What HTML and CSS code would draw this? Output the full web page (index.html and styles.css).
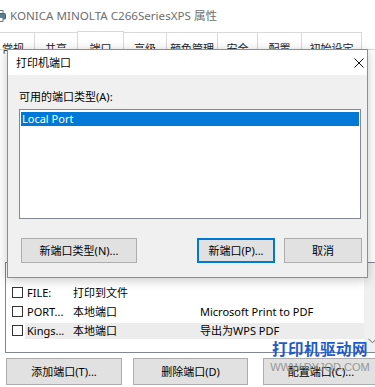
FILE: index.html
```html
<!DOCTYPE html>
<html lang="zh-CN">
<head>
<meta charset="utf-8">
<title>打印机端口</title>
<link rel="stylesheet" href="styles.css">
</head>
<body>
<div class="screen">
  <div class="win">
    <div class="titlebar">
      <svg class="app-icon" width="13" height="12" viewBox="0 0 13 12">
        <rect x="3" y="0.5" width="7" height="3.5" fill="#fff" stroke="#6b7b86"/>
        <rect x="0.5" y="3.5" width="12" height="5.5" rx="1" fill="#5d7f95" stroke="#44606f"/>
        <rect x="3" y="7.5" width="7" height="4" fill="#fff" stroke="#6b7b86"/>
      </svg>
      <span class="title">KONICA MINOLTA C266SeriesXPS 属性</span>
    </div>
    <div class="tabs">
      <div class="tab t1">常规</div>
      <div class="tab t2">共享</div>
      <div class="tab t3 sel">端口</div>
      <div class="tab t4">高级</div>
      <div class="tab t5">颜色管理</div>
      <div class="tab t6">安全</div>
      <div class="tab t7">配置</div>
      <div class="tab t8">初始设定</div>
    </div>
    <div class="page">
      <div class="ports">
        <div class="port-list">
          <div class="port-head"></div>
          <div class="row"><span class="cb"></span><div class="cells"><span class="c1">FILE:</span><span class="c2">打印到文件</span><span class="c3"></span></div></div>
          <div class="row"><span class="cb"></span><div class="cells"><span class="c1">PORT...</span><span class="c2">本地端口</span><span class="c3">Microsoft Print to PDF</span></div></div>
          <div class="row"><span class="cb"></span><div class="cells hot"><span class="c1">Kings...</span><span class="c2">本地端口</span><span class="c3">导出为WPS PDF</span></div></div>
        </div>
        <div class="scrollbar">
          <svg class="arrow" width="9" height="6" viewBox="0 0 9 6"><path d="M0.5 0.8 L4.5 4.8 L8.5 0.8" fill="none" stroke="#606060" stroke-width="1"/></svg>
        </div>
      </div>
      <div class="page-buttons">
        <button class="btn pb1">添加端口(T)...</button>
        <button class="btn pb2">删除端口(D)</button>
        <button class="btn pb3">配置端口(C)...</button>
      </div>
    </div>
  </div>

  <div class="dialog">
    <div class="dlg-title">
      <span>打印机端口</span>
      <svg class="close" width="10" height="10" viewBox="0 0 10 10"><path d="M0.5 0.5 L9.5 9.5 M9.5 0.5 L0.5 9.5" stroke="#111" stroke-width="1"/></svg>
    </div>
    <div class="dlg-body">
      <label class="dlg-label">可用的端口类型(A):</label>
      <div class="listbox">
        <div class="item sel">Local Port</div>
      </div>
      <div class="dlg-buttons">
        <button class="btn db1">新端口类型(N)...</button>
        <button class="btn db2 default">新端口(P)...</button>
        <button class="btn db3">取消</button>
      </div>
    </div>
  </div>

  <div class="watermark">
    <span class="wm-cn">打印机驱动网</span>
    <span class="wm-url">WWW.DYJQD.COM</span>
  </div>
</div>
</body>
</html>
```
FILE: styles.css
```css
* { box-sizing: border-box; margin: 0; padding: 0; }
html, body { width: 375px; height: 387px; overflow: hidden; background: #fff; }
body {
  font-family: "Noto Sans", "Noto Sans CJK SC", sans-serif;
  font-size: 11px;
  line-height: 14px;
  color: #000;
}
.screen { position: relative; width: 375px; height: 387px; overflow: hidden; }

/* parent window */
.win { position: relative; z-index: 0; display: flex; flex-direction: column; width: 375px; height: 387px; background: #fff; }
.titlebar {
  height: 31px;
  display: flex;
  align-items: center;
  gap: 4px;
  margin-left: -7px;
  flex: none;
}
.app-icon { flex: none; }
.title { font-size: 11.6px; color: #6e6e6e; white-space: nowrap; }

.tabs {
  display: flex;
  align-items: flex-end;
  height: 19px;
  margin-left: -8px;
  border-bottom: 1px solid #d9d9d9;
  flex: none;
}
.tab {
  height: 17px;
  padding-top: 9px;
  text-align: center;
  border: 1px solid #d9d9d9;
  border-bottom: none;
  border-left: none;
  background: #fff;
  color: #222;
  flex: none;
  white-space: nowrap;
}
.tab.sel { height: 19px; margin-bottom: -1px; padding-top: 10px; border-left: 1px solid #d9d9d9; margin-left: -1px; }
.t1 { width: 43px; }
.t2 { width: 43px; }
.t3 { width: 47px; }
.t4 { width: 43px; }
.t5 { width: 51px; }
.t6 { width: 40px; }
.t7 { width: 44px; }
.t8 { width: 60px; }

.page { flex: 1; display: flex; flex-direction: column; }
.ports {
  margin-top: 212px;
  margin-left: 5px;
  width: 377px;
  height: 91px;
  border: 1px solid #828790;
  display: flex;
  flex: none;
}
.port-list { flex: 1; min-width: 0; }
.port-head { height: 20px; }
.row { display: flex; align-items: center; height: 19px; }
.cb {
  flex: none;
  width: 11px;
  height: 11px;
  margin-left: 6px;
  border: 1px solid #333;
  background: #fff;
}
.cells {
  flex: 1;
  display: flex;
  align-items: center;
  height: 19px;
  margin-left: 2px;
  padding-left: 2px;
  white-space: nowrap;
}
.cells.hot { background: #ececec; height: 16px; }
.c1 { width: 46px; flex: none; }
.c2 { width: 127px; flex: none; }
.c3 { flex: 1; }
.scrollbar {
  width: 17px;
  flex: none;
  background: #f0f0f0;
  display: flex;
  flex-direction: column;
  justify-content: flex-end;
  align-items: center;
  padding-bottom: 8px;
}

.btn {
  font-family: inherit;
  font-size: 11px;
  line-height: 14px;
  color: #000;
  background: #e1e1e1;
  border: 1px solid #adadad;
  flex: none;
}
.page-buttons { display: flex; margin-top: 5px; height: 27px; flex: none; }
.page-buttons .btn { height: 27px; }
.pb1 { width: 116px; margin-left: 6px; }
.pb2 { width: 115px; margin-left: 11px; }
.pb3 { width: 116px; margin-left: 15px; }

/* dialog */
.dialog {
  position: absolute;
  z-index: 2;
  left: 7px;
  top: 49px;
  width: 361px;
  height: 229px;
  border: 1px solid #8e8e8e;
  background: #f0f0f0;
  display: flex;
  flex-direction: column;
  box-shadow: 0 2px 10px rgba(0, 0, 0, 0.22);
}
.dlg-title {
  height: 25px;
  background: #fff;
  display: flex;
  align-items: center;
  justify-content: space-between;
  padding: 0 3px 0 8px;
  flex: none;
}
.dlg-body { padding: 15px 6px 0 11px; display: flex; flex-direction: column; }
.dlg-label { display: block; height: 14px; }
.listbox {
  margin-top: 5px;
  height: 110px;
  background: #fff;
  border: 1px solid #828790;
  padding: 2px 1px;
}
.item { height: 14px; line-height: 14px; padding-left: 1px; }
.item.sel { background: #0078d7; color: #fff; }
.dlg-buttons { display: flex; margin-top: 19px; height: 25px; }
.dlg-buttons .btn { height: 25px; }
.db1 { width: 116px; margin-left: 2px; }
.db2 { width: 78px; margin-left: 60px; }
.db3 { width: 78px; margin-left: 9px; }
.btn.default { border: 1px solid #0078d7; box-shadow: inset 0 0 0 1px #0078d7; }

/* watermark overlay */
.watermark {
  position: absolute;
  z-index: 3;
  left: 265px;
  top: 338px;
  width: 110px;
  display: flex;
  flex-direction: column;
  align-items: center;
  pointer-events: none;
}
.wm-cn {
  font-family: "Noto Sans CJK SC", sans-serif;
  font-weight: 700;
  font-size: 15.5px;
  line-height: 20px;
  color: #1e5ccc;
  letter-spacing: 0.5px;
}
.wm-url {
  margin-top: 3px;
  font-family: "Liberation Sans", sans-serif;
  font-size: 11px;
  line-height: 13px;
  color: #8a8a8a;
  opacity: 0.85;
}
```
